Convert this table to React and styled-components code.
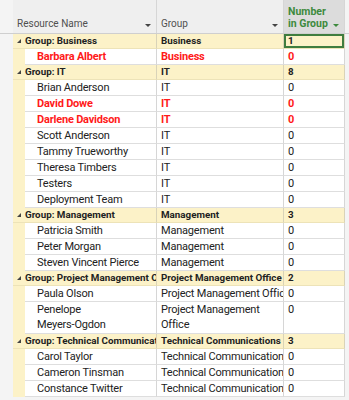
import React from "react";
import styled, { createGlobalStyle } from "styled-components";

const Global = createGlobalStyle`
  html, body { margin: 0; padding: 0; background: #f4f4f4; }
  body { font-family: Roboto, "Open Sans", "DejaVu Sans", sans-serif; }
`;

const Page = styled.div`
  width: 349px;
  height: 400px;
  overflow: hidden;
  display: flex;
  flex-direction: column;
  background: #f4f4f4;
`;

const HeaderRow = styled.div`
  display: flex;
  height: 33px;
  border-bottom: 1px solid #cfcfcf;
  padding-left: 13px;
  background: #f4f4f4;
  flex: none;
`;

const HeadCell = styled.div`
  width: ${(p) => p.$w}px;
  flex: none;
  box-sizing: border-box;
  background: ${(p) => (p.$active ? "#dcdcdc" : "#efefef")};
  border-right: 1px solid #d6d6d6;
  display: flex;
  align-items: flex-end;
  justify-content: space-between;
  padding: 0 5px 3px 4px;
  font-size: ${(p) => (p.$active ? 10.5 : 10)}px;
  line-height: 12px;
  white-space: nowrap;
  color: ${(p) => (p.$active ? "#3d8a3d" : "#505050")};
  font-weight: ${(p) => (p.$active ? 700 : 400)};
`;

const Arrow = styled.span`
  width: 0;
  height: 0;
  border-left: 3px solid transparent;
  border-right: 3px solid transparent;
  border-top: 3px solid ${(p) => p.$color || "#444"};
  margin-bottom: 3px;
  flex: none;
`;

const Row = styled.div`
  display: flex;
  height: ${(p) => p.$h}px;
  padding-left: 13px;
  flex: none;
`;

const GroupCell = styled.div`
  width: ${(p) => p.$w}px;
  flex: none;
  box-sizing: border-box;
  background: #fcf2c8;
  border-right: 1px solid #d9d3b8;
  border-bottom: 1px solid #ede3b8;
  font-size: 9.8px;
  font-weight: 700;
  color: #222;
  line-height: 14px;
  padding-left: ${(p) => p.$pl || 4}px;
  white-space: nowrap;
  overflow: hidden;
  position: relative;
  display: flex;
  align-items: center;
  gap: 4px;
`;

const Selected = styled.div`
  position: absolute;
  inset: 0;
  border: 2px solid #3f7d3f;
  pointer-events: none;
`;

const Tri = styled.span`
  width: 0;
  height: 0;
  border-left: 4px solid transparent;
  border-bottom: 4px solid #444;
  flex: none;
`;

const Indent = styled.div`
  width: 12px;
  flex: none;
  background: #fcf2c8;
`;

const Cell = styled.div`
  width: ${(p) => p.$w}px;
  flex: none;
  box-sizing: border-box;
  background: #fff;
  border-right: 1px solid #d6d6d6;
  border-bottom: 1px solid #dedede;
  padding: 1px 1px 0 4px;
  padding-left: ${(p) => p.$pl || 4}px;
  font-size: 11px;
  letter-spacing: -0.2px;
  line-height: 14.5px;
  color: ${(p) => (p.$red ? "#ff1a1a" : "#222")};
  font-weight: ${(p) => (p.$red ? 700 : 400)};
  overflow: hidden;
  white-space: nowrap;
`;

const NAME_W = 132;
const GROUP_W = 127;
const NUM_W = 61;

const data = [
  { group: "Business", count: 1, items: [{ n: "Barbara Albert", g: "Business", red: true }] },
  {
    group: "IT",
    count: 8,
    items: [
      { n: "Brian Anderson", g: "IT" },
      { n: "David Dowe", g: "IT", red: true },
      { n: "Darlene Davidson", g: "IT", red: true },
      { n: "Scott Anderson", g: "IT" },
      { n: "Tammy Trueworthy", g: "IT" },
      { n: "Theresa Timbers", g: "IT" },
      { n: "Testers", g: "IT" },
      { n: "Deployment Team", g: "IT" },
    ],
  },
  {
    group: "Management",
    count: 3,
    items: [
      { n: "Patricia Smith", g: "Management" },
      { n: "Peter Morgan", g: "Management" },
      { n: "Steven Vincent Pierce", g: "Management" },
    ],
  },
  {
    group: "Project Management Office",
    count: 2,
    items: [
      { n: "Paula Olson", g: "Project Management Office" },
      { n: ["Penelope", "Meyers-Ogdon"], g: ["Project Management", "Office"], wrap: true },
    ],
  },
  {
    group: "Technical Communications",
    count: 3,
    items: [
      { n: "Carol Taylor", g: "Technical Communication" },
      { n: "Cameron Tinsman", g: "Technical Communication" },
      { n: "Constance Twitter", g: "Technical Communication" },
    ],
  },
];

const Lines = ({ v }) =>
  Array.isArray(v) ? (
    <>
      {v[0]}
      <br />
      {v[1]}
    </>
  ) : (
    v
  );

export default function App() {
  return (
    <>
      <Global />
      <Page>
        <HeaderRow>
          <HeadCell $w={NAME_W + 12}>
            <span>Resource Name</span>
            <Arrow />
          </HeadCell>
          <HeadCell $w={GROUP_W}>
            <span>Group</span>
            <Arrow />
          </HeadCell>
          <HeadCell $w={NUM_W} $active>
            <span>
              Number
              <br />
              in Group
            </span>
            <Arrow $color="#3d8a3d" />
          </HeadCell>
        </HeaderRow>
        {data.map((grp, gi) => (
          <React.Fragment key={grp.group}>
            <Row $h={15}>
              <GroupCell $w={NAME_W + 12}>
                <Tri />
                <span>Group: {grp.group}</span>
              </GroupCell>
              <GroupCell $w={GROUP_W}>{grp.group}</GroupCell>
              <GroupCell $w={NUM_W}>
                {grp.count}
                {gi === 0 && <Selected />}
              </GroupCell>
            </Row>
            {grp.items.map((it, i) => (
              <Row key={i} $h={it.wrap ? 32 : 16}>
                <Indent />
                <Cell $w={NAME_W} $pl={12} $red={it.red}>
                  <Lines v={it.n} />
                </Cell>
                <Cell $w={GROUP_W} $red={it.red}>
                  <Lines v={it.g} />
                </Cell>
                <Cell $w={NUM_W} $red={it.red}>
                  0
                </Cell>
              </Row>
            ))}
          </React.Fragment>
        ))}
      </Page>
    </>
  );
}
